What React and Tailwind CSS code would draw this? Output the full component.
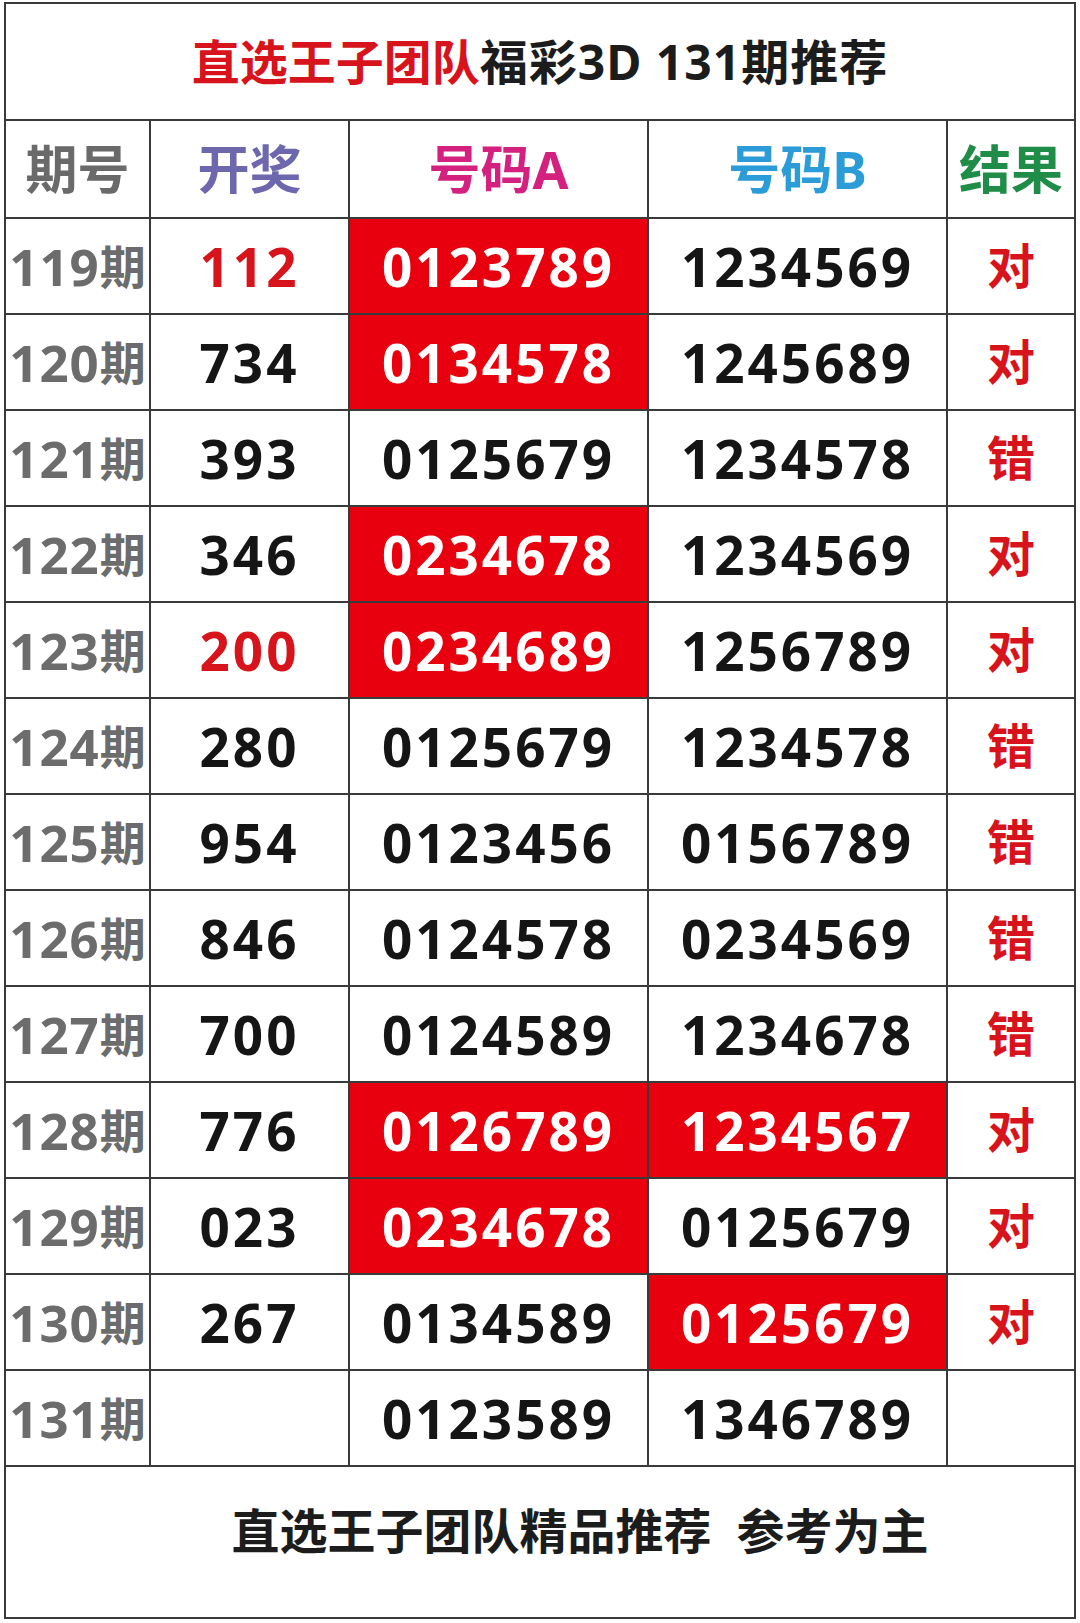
const rows = [
  { no: '119', draw: '112', drawRed: true, a: '0123789', aHit: true, b: '1234569', bHit: false, res: '对' },
  { no: '120', draw: '734', a: '0134578', aHit: true, b: '1245689', res: '对' },
  { no: '121', draw: '393', a: '0125679', b: '1234578', res: '错' },
  { no: '122', draw: '346', a: '0234678', aHit: true, b: '1234569', res: '对' },
  { no: '123', draw: '200', drawRed: true, a: '0234689', aHit: true, b: '1256789', res: '对' },
  { no: '124', draw: '280', a: '0125679', b: '1234578', res: '错' },
  { no: '125', draw: '954', a: '0123456', b: '0156789', res: '错' },
  { no: '126', draw: '846', a: '0124578', b: '0234569', res: '错' },
  { no: '127', draw: '700', a: '0124589', b: '1234678', res: '错' },
  { no: '128', draw: '776', a: '0126789', aHit: true, b: '1234567', bHit: true, res: '对' },
  { no: '129', draw: '023', a: '0234678', aHit: true, b: '0125679', res: '对' },
  { no: '130', draw: '267', a: '0134589', b: '0125679', bHit: true, res: '对' },
  { no: '131', draw: '', a: '0123589', b: '1346789', res: '' },
];

const cell = 'flex items-center justify-center border-r-2 border-b-2 border-[#3a3a3a] whitespace-nowrap';

function NumCell({ value, hit }) {
  return (
    <div
      className={`${cell} text-[53px] font-bold tracking-[3px] ${hit ? 'bg-[#e8000e] text-white' : 'bg-white text-[#151515]'}`}
    >
      {value}
    </div>
  );
}

export default function App() {
  return (
    <div
      className="w-[1080px] h-[1623px] bg-white px-[4px] pt-[2px] pb-[4px]"
      style={{ fontFamily: '"Noto Sans", "Noto Sans CJK SC", sans-serif' }}
    >
      <div className="flex h-full flex-col border-l-2 border-t-2 border-[#3a3a3a]">
        <div className="flex h-[117px] items-center justify-center border-r-2 border-b-2 border-[#3a3a3a] text-[48px] font-bold leading-none">
          <span className="text-[#d7141c]">直选王子团队</span>
          <span className="text-[#1c1c1c] tracking-[1px]">福彩3D 131期推荐</span>
        </div>

        <div className="grid grid-cols-[145px_199px_299px_299px_128px] grid-rows-[98px_repeat(13,96px)] leading-none">
          <div className={`${cell} text-[52px] font-bold text-[#6a6a6a]`}>期号</div>
          <div className={`${cell} text-[52px] font-bold text-[#6d68ad]`}>开奖</div>
          <div className={`${cell} text-[52px] font-bold text-[#d4207e]`}>号码A</div>
          <div className={`${cell} text-[52px] font-bold text-[#2b9cd8]`}>号码B</div>
          <div className={`${cell} text-[52px] font-bold text-[#1f8c48]`}>结果</div>

          {rows.map((r) => (
            <div key={r.no} className="contents">
              <div className={`${cell} font-bold text-[#6c6c6c]`}>
                <span className="text-[51px] tracking-[1px]">{r.no}</span>
                <span className="text-[46px]">期</span>
              </div>
              <div
                className={`${cell} text-[53px] font-bold tracking-[3px] ${r.drawRed ? 'text-[#d7141c]' : 'text-[#151515]'}`}
              >
                {r.draw}
              </div>
              <NumCell value={r.a} hit={r.aHit} />
              <NumCell value={r.b} hit={r.bHit} />
              <div className={`${cell} text-[48px] font-bold text-[#d7141c]`}>{r.res}</div>
            </div>
          ))}
        </div>

        <div className="flex flex-1 items-center justify-center border-r-2 border-b-2 border-[#3a3a3a] pb-[22px] pl-20 text-[48px] font-bold text-[#1c1c1c]">
          直选王子团队精品推荐&nbsp;&nbsp;参考为主
        </div>
      </div>
    </div>
  );
}
